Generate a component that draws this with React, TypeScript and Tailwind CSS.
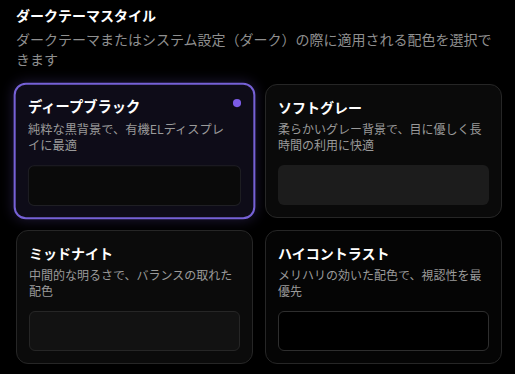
import React from "react";

type Theme = {
  id: string;
  name: string;
  description: string;
  cardClass: string;
  previewClass: string;
};

const themes: Theme[] = [
  {
    id: "deep-black",
    name: "ディープブラック",
    description: "純粋な黒背景で、有機ELディスプレイに最適",
    cardClass: "bg-[#0e0c18]",
    previewClass: "bg-[#0a0a0a] border border-[#1f1f24]",
  },
  {
    id: "soft-gray",
    name: "ソフトグレー",
    description: "柔らかいグレー背景で、目に優しく長時間の利用に快適",
    cardClass: "bg-[#0a0a0a]",
    previewClass: "bg-[#1c1c1c]",
  },
  {
    id: "midnight",
    name: "ミッドナイト",
    description: "中間的な明るさで、バランスの取れた配色",
    cardClass: "bg-[#0b0b0b]",
    previewClass: "bg-[#121212] border border-[#262626]",
  },
  {
    id: "high-contrast",
    name: "ハイコントラスト",
    description: "メリハリの効いた配色で、視認性を最優先",
    cardClass: "bg-[#050505]",
    previewClass: "bg-black border border-[#2e2e2e]",
  },
];

function ThemeCard({ theme, selected }: { theme: Theme; selected: boolean }) {
  return (
    <div
      className={
        selected
          ? `relative rounded-xl border-2 border-[#7661d6] px-3 py-[11px] scale-[1.02] shadow-[0_0_12px_rgba(118,97,214,0.25)] ${theme.cardClass}`
          : `relative rounded-xl border border-[#262626] p-3 ${theme.cardClass}`
      }
    >
      {selected && (
        <span className="absolute right-[12px] top-[14px] h-2 w-2 rounded-full bg-[#7c5ce6]" />
      )}
      <h3 className="text-sm font-bold leading-5 text-white">{theme.name}</h3>
      <p className={`mt-1 text-xs leading-4 text-[#9a9a9a] ${selected ? "pr-3" : ""}`}>
        {theme.description}
      </p>
      <div className={`mt-3 h-10 rounded-md ${theme.previewClass}`} />
    </div>
  );
}

export default function App() {
  return (
    <div
      className="min-h-screen bg-black pl-4 pr-[13px] pt-[5px] pb-3"
      style={{ fontFamily: '"Noto Sans CJK JP", "Noto Sans", sans-serif' }}
    >
      <h2 className="text-sm font-bold leading-5 text-white">ダークテーマスタイル</h2>
      <p className="mt-1 text-sm leading-[20px] text-[#8f8f8f]">
        ダークテーマまたはシステム設定（ダーク）の際に適用される配色を選択できます
      </p>
      <div className="mt-[15px] grid grid-cols-2 gap-3">
        {themes.map((t, i) => (
          <ThemeCard key={t.id} theme={t} selected={i === 0} />
        ))}
      </div>
    </div>
  );
}
